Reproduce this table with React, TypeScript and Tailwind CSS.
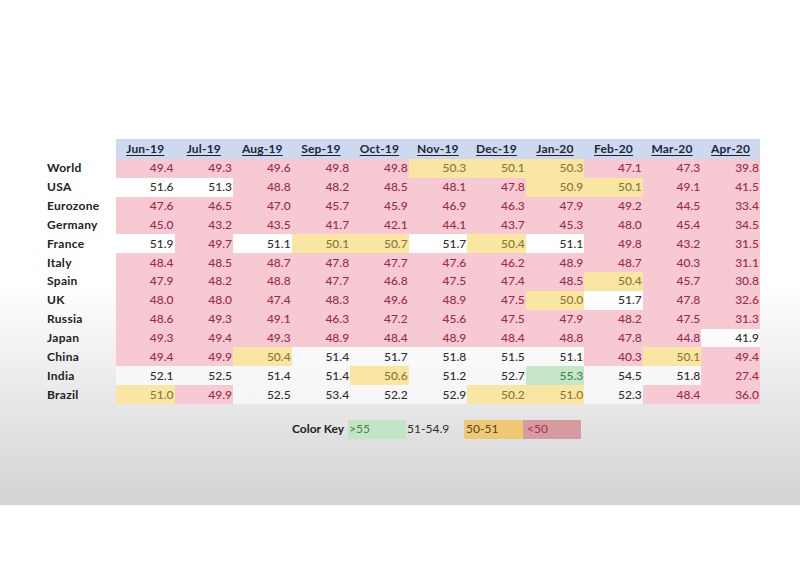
type Tone = "P" | "W" | "Y" | "G";

const MONTHS = ["Jun-19", "Jul-19", "Aug-19", "Sep-19", "Oct-19", "Nov-19", "Dec-19", "Jan-20", "Feb-20", "Mar-20", "Apr-20"];

// value + tone per cell, written as "49.4P"
const ROWS: { name: string; cells: string }[] = [
	{ name: "World", cells: "49.4P 49.3P 49.6P 49.8P 49.8P 50.3Y 50.1Y 50.3Y 47.1P 47.3P 39.8P" },
	{ name: "USA", cells: "51.6W 51.3W 48.8P 48.2P 48.5P 48.1P 47.8P 50.9Y 50.1Y 49.1P 41.5P" },
	{ name: "Eurozone", cells: "47.6P 46.5P 47.0P 45.7P 45.9P 46.9P 46.3P 47.9P 49.2P 44.5P 33.4P" },
	{ name: "Germany", cells: "45.0P 43.2P 43.5P 41.7P 42.1P 44.1P 43.7P 45.3P 48.0P 45.4P 34.5P" },
	{ name: "France", cells: "51.9W 49.7P 51.1W 50.1Y 50.7Y 51.7W 50.4Y 51.1W 49.8P 43.2P 31.5P" },
	{ name: "Italy", cells: "48.4P 48.5P 48.7P 47.8P 47.7P 47.6P 46.2P 48.9P 48.7P 40.3P 31.1P" },
	{ name: "Spain", cells: "47.9P 48.2P 48.8P 47.7P 46.8P 47.5P 47.4P 48.5P 50.4Y 45.7P 30.8P" },
	{ name: "UK", cells: "48.0P 48.0P 47.4P 48.3P 49.6P 48.9P 47.5P 50.0Y 51.7W 47.8P 32.6P" },
	{ name: "Russia", cells: "48.6P 49.3P 49.1P 46.3P 47.2P 45.6P 47.5P 47.9P 48.2P 47.5P 31.3P" },
	{ name: "Japan", cells: "49.3P 49.4P 49.3P 48.9P 48.4P 48.9P 48.4P 48.8P 47.8P 44.8P 41.9W" },
	{ name: "China", cells: "49.4P 49.9P 50.4Y 51.4W 51.7W 51.8W 51.5W 51.1W 40.3P 50.1Y 49.4P" },
	{ name: "India", cells: "52.1W 52.5W 51.4W 51.4W 50.6Y 51.2W 52.7W 55.3G 54.5W 51.8W 27.4P" },
	{ name: "Brazil", cells: "51.0Y 49.9P 52.5W 53.4W 52.2W 52.9W 50.2Y 51.0Y 52.3W 48.4P 36.0P" },
];

const TONE: Record<Tone, string> = {
	P: "bg-[#f7c9d3] text-[#9a2a4c]",
	W: "bg-white/60 text-[#2e2e2e]",
	Y: "bg-[#f9e6a2] text-[#8c7733]",
	G: "bg-[#c6e6c9] text-[#3b8746]",
};

function Cell({ raw }: { raw: string }) {
	const tone = raw.slice(-1) as Tone;
	return (
		<div className={`h-[18.85px] flex items-center justify-end pr-[1px] text-[12px] font-medium ${TONE[tone]}`}>
			{raw.slice(0, -1)}
		</div>
	);
}

export default function App() {
	return (
		<div className="w-[800px] h-[567px] bg-white font-['Lato','Liberation_Sans',sans-serif]">
			<div className="h-[505px] bg-linear-to-b from-white from-[56%] to-[#d3d3d3] pt-[139px] pl-[47px]">
				<div className="grid grid-cols-[69px_repeat(11,58.545px)]">
					<div className="h-[20px]" />
					{MONTHS.map((m) => (
						<div
							key={m}
							className="h-[20px] bg-[#cdd9ee] flex items-center justify-center text-[12px] font-bold text-[#1e2540] underline underline-offset-2 tracking-[0.2px]"
						>
							{m}
						</div>
					))}
					{ROWS.map((r) => (
						<>
							<div key={r.name} className="h-[18.85px] flex items-center text-[12px] font-bold text-[#222] tracking-[0.3px]">
								{r.name}
							</div>
							{r.cells.split(" ").map((c, i) => (
								<Cell key={r.name + i} raw={c} />
							))}
						</>
					))}
				</div>

				<div className="mt-[16px] ml-[245px] flex items-center h-[19px] text-[12px]">
					<span className="font-bold text-[#222] mr-[4px]">Color Key</span>
					<span className="w-[58px] h-full bg-[#c3e4c6] text-[#3e8a4b] flex items-center pl-[1px]">&gt;55</span>
					<span className="w-[58px] h-full text-[#2e2e2e] flex items-center pl-[1px]">51-54.9</span>
					<span className="w-[59px] h-full bg-[#efc874] text-[#5a4420] flex items-center pl-[2px]">50-51</span>
					<span className="w-[58px] h-full bg-[#d59b9f] text-[#b02c50] flex items-center pl-[4px]">&lt;50</span>
				</div>
			</div>
		</div>
	);
}
